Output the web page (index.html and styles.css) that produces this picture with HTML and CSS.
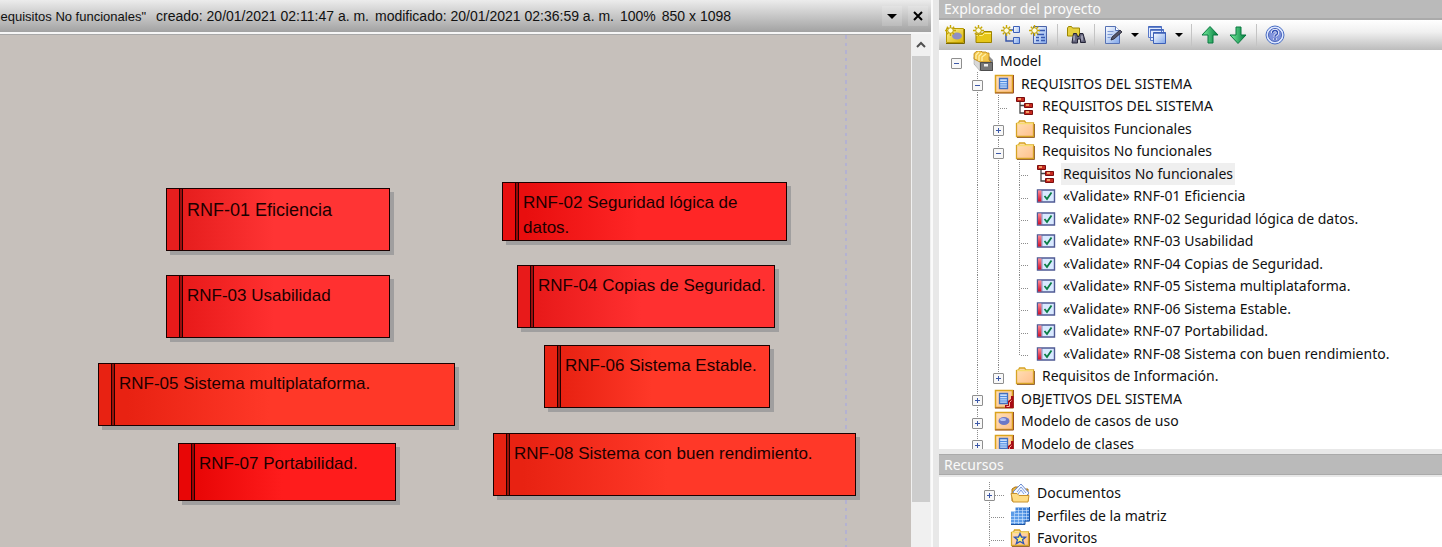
FILE: index.html
```html
<!DOCTYPE html>
<html lang="es">
<head>
<meta charset="utf-8">
<title>Requisitos No funcionales</title>
<link rel="stylesheet" href="styles.css">
</head>
<body>
<svg class="defs" aria-hidden="true">
  <defs>
    <linearGradient id="gGold" x1="0" y1="0" x2="1" y2="1"><stop offset="0" stop-color="#fff3a0"/><stop offset="1" stop-color="#d9b400"/></linearGradient>
    <linearGradient id="gPeach" x1="0" y1="0" x2="1" y2="1"><stop offset="0" stop-color="#ffe0b8"/><stop offset="1" stop-color="#ffc08c"/></linearGradient>
    <linearGradient id="gBlue" x1="0" y1="0" x2="1" y2="1"><stop offset="0" stop-color="#ffffff"/><stop offset="1" stop-color="#7fa6ea"/></linearGradient>
    <linearGradient id="gGreen" x1="0" y1="0" x2="1" y2="0"><stop offset="0" stop-color="#7af0a0"/><stop offset="1" stop-color="#007a3c"/></linearGradient>
    <linearGradient id="gRed" x1="0" y1="0" x2="0" y2="1"><stop offset="0" stop-color="#ff8a94"/><stop offset="1" stop-color="#d0102c"/></linearGradient>
  </defs>
  <symbol id="spark" viewBox="0 0 12 12"><path d="M6 0v12M0 6h12M2 2l8 8M10 2l-8 8" stroke="#c8a800" stroke-width="1.5"/><circle cx="6" cy="6" r="3" fill="#fffde0" stroke="#b89a00"/></symbol>
  <symbol id="new-view" viewBox="0 0 20 20"><path d="M1.500 3.500h17v14h-17z" fill="url(#gGold)" stroke="#b89a00"/><path d="M1 18.500h18.500V4" fill="none" stroke="#7a6600"/><ellipse cx="12" cy="11" rx="5" ry="3.500" fill="#8f8fc4"/><use href="#spark" x="0" y="0" width="11" height="11"/></symbol>
  <symbol id="new-folder" viewBox="0 0 20 20"><path d="M3 17.500V9h6l2-2.500h7.500v11z" fill="#e6c619" stroke="#9c8300"/><path d="M3.500 10.500h6l2-2h6.500" fill="none" stroke="#fff08a"/><use href="#spark" x="0" y="0" width="11" height="11"/></symbol>
  <symbol id="new-diagram" viewBox="0 0 20 20"><path d="M5 8v8h8M8 5h5" fill="none" stroke="#3856a8" stroke-width="1.500"/><path d="M12.500 1.500h6v6h-6zM12.500 12.500h6v6h-6z" fill="url(#gBlue)" stroke="#3c60b8"/><use href="#spark" x="0" y="0" width="11" height="11"/></symbol>
  <symbol id="new-element" viewBox="0 0 20 20"><path d="M4.500 1.500h13v17h-13z" fill="url(#gBlue)" stroke="#4a62a8"/><path d="M10 5.500h6M8 9.500h7M7 12.500h3M12 12.500h4M7 15.500h3M12 15.500h4" stroke="#3658b0" stroke-width="1.500"/><use href="#spark" x="0" y="0" width="11" height="11"/></symbol>
  <symbol id="find" viewBox="0 0 20 20"><path d="M1.500 11V3l1-1.500h3l1 1.500h7v8z" fill="#e6d040" stroke="#9c8700"/><path d="M6 17.500l1.500-9h3l1 3h1.500l1-3h3l2.500 9h-5V14h-3v4H6z" fill="#65657c" stroke="#232336"/><path d="M8 10.500v5M16 10.500v5" stroke="#d4d4e4"/></symbol>
  <symbol id="edit-doc" viewBox="0 0 20 20"><path d="M2.500 1.500h10l4 4v13h-14z" fill="url(#gBlue)" stroke="#5672b4"/><path d="M12.500 1.500v4h4" fill="#fff" stroke="#5672b4"/><path d="M4.500 6.500h6M4.500 9.500h5M4.500 12.500h3" stroke="#7d99d4"/><path d="M8 15l1-3 8-7 2 2-8 7z" fill="#555568" stroke="#20202c" stroke-width=".8"/></symbol>
  <symbol id="windows" viewBox="0 0 20 20"><path d="M1.500 1.500h13v11h-13zM3.500 4.500h13v11h-13z" fill="#e3ecff" stroke="#5878c8"/><path d="M6.500 7.500h12v11h-12z" fill="url(#gBlue)" stroke="#3c60b8"/><path d="M1.500 2h13M3.500 5h13M6.500 8h12" stroke="#3c60b8" stroke-width="1.500"/></symbol>
  <symbol id="up" viewBox="0 0 20 20"><path d="M10 1.500l8 8.500h-5v8H8v-8H2z" fill="url(#gGreen)" stroke="#087840"/></symbol>
  <symbol id="down" viewBox="0 0 20 20"><path d="M10 18.500l8-8.500h-5V2H8v8H2z" fill="url(#gGreen)" stroke="#087840"/></symbol>
  <symbol id="help" viewBox="0 0 20 20"><circle cx="10" cy="10" r="9" fill="#dce6ff" stroke="#4a6fc4"/><circle cx="10" cy="10" r="6.500" fill="#8193dc" stroke="#4964b8"/><path d="M7.500 8q0-2.500 2.500-2.500T12.500 8q0 1.300-1.500 2-1 .5-1 1.800M10 13v2" fill="none" stroke="#fff" stroke-width="3"/><path d="M7.500 8q0-2.500 2.500-2.500T12.500 8q0 1.300-1.500 2-1 .5-1 1.800M10 13v2" fill="none" stroke="#3450b4" stroke-width="1.500"/></symbol>
  <symbol id="cabinet" viewBox="0 0 20 20"><path d="M1 4l7-4 8 5 4 4v11H9L1 13z" fill="#8d8d8d"/><path d="M1 6l6 5v9l-6-7z" fill="#d8d8d8" stroke="#999" stroke-width=".5"/><path d="M1 8V2.500L4 0h4l1 1h4l1 1h2v7l2 2H7z" fill="#f3c64c" stroke="#b98310" stroke-width=".8"/><path d="M3 8V4l3-3M6 10V5l3-3M9 10V6l4-3" fill="none" stroke="#fff1a8" stroke-width="1.300"/><path d="M7.500 11.500h12v8h-12z" fill="#777" stroke="#4d4d4d"/><path d="M11 13h4v2.500h-4z" fill="#eee"/></symbol>
  <symbol id="pkg" viewBox="0 0 20 20"><path d="M1.500 1.500h17v17h-17z" fill="url(#gPeach)" stroke="#dba31c" stroke-width="1.500"/><path d="M1 19h18.500V1" fill="none" stroke="#99502c"/><path d="M5.500 4.500h8v10h-8z" fill="#c9defc" stroke="#426fc0" stroke-width="1.300"/><path d="M6 7.500h7M6 9.800h7M6 12h7" stroke="#4c8ae0"/></symbol>
  <symbol id="pkg-red" viewBox="0 0 20 20"><use href="#pkg" width="20" height="20"/><path d="M11 19v-3h3v-4l3-2V7h2.500v12z" fill="#a80a14"/><path d="M12.500 17.500h3v-4l2-2" fill="none" stroke="#ffb4a0"/></symbol>
  <symbol id="pkg-use" viewBox="0 0 20 20"><path d="M1.500 1.500h17v17h-17z" fill="url(#gPeach)" stroke="#dba31c" stroke-width="1.500"/><path d="M1 19h18.500V1" fill="none" stroke="#99502c"/><ellipse cx="10" cy="10" rx="5.500" ry="4" fill="#6c78c8"/><ellipse cx="9" cy="8.500" rx="3" ry="1.500" fill="#b5c0f2"/></symbol>
  <symbol id="folder" viewBox="0 0 20 20"><path d="M1.500 17.500v-13l2-.5 1-2h5l1.500 2h7.500v13.500z" fill="url(#gPeach)" stroke="#d6a324" stroke-width="1.300"/><path d="M2 18.500h17.500V5" fill="none" stroke="#9c6a38"/><path d="M2 4.500h16" stroke="#f7dc6e" stroke-width="1.500"/></symbol>
  <symbol id="diagram" viewBox="0 0 20 20"><path d="M5 5v12h5M5 9.500h5" fill="none" stroke="#444" stroke-width="1.300"/><path d="M1.500 1.500h8v4h-8zM9.500 7.500h8v4h-8zM9.500 14.500h8v4h-8z" fill="#c52a20" stroke="#7a0d0d"/><path d="M3 3h3M11 9h3M11 16h3" stroke="#ffc47c" stroke-width="1.300"/></symbol>
  <symbol id="req" viewBox="0 0 20 20"><path d="M1.500 4h17v12h-17z" fill="#d9e9ff" stroke="#4f5a94" stroke-width="1.400"/><path d="M2 4.500h3.500v11H2z" fill="url(#gRed)"/><path d="M6 4.500v11" stroke="#4f5a94" stroke-width=".6"/><path d="M8.500 10l2.500 3 4.500-6.500" fill="none" stroke="#0a7c44" stroke-width="1.800"/></symbol>
  <symbol id="docs" viewBox="0 0 20 20"><path d="M2 18V6l3-2h3l2 2h8v12z" fill="#e8b240" stroke="#a8741c"/><path d="M3 9l8-8 8 9-4 4H6z" fill="#f4f8ff" stroke="#6c8cd0"/><path d="M7 9l4-5 5 6M8 11l3-4 3 4" fill="none" stroke="#7c9ce0"/><path d="M1 10.500h6l2 2h10l-1 6.500H3z" fill="#ffdc84" stroke="#c8922c"/></symbol>
  <symbol id="matrix" viewBox="0 0 20 20"><path d="M5.500 1.500h14v14h-14z" fill="#3f82d8"/><path d="M1 5.500h14v13H1z" fill="#5c9ce8"/><path d="M5 4.500h14M5 7.500h14M1 10.500h18M1 13.500h18M1 16.500h14M4.500 6v12M8.500 2v16M12.500 2v16M16.500 2v13" stroke="#d4e7ff" stroke-width=".6"/><path d="M1 18.500h14V15h4.500V1" fill="none" stroke="#1e55a4"/></symbol>
  <symbol id="fav" viewBox="0 0 20 20"><use href="#folder" width="20" height="20"/><path d="M10 5.500l1.500 3.500 4 .2-3 2.500 1.200 4L10 13.500 6.300 15.700l1.200-4-3-2.500 4-.2z" fill="#fff36c" stroke="#2f55b4" stroke-width="1.300"/></symbol>
</svg>

<div class="app">
  <main class="editor">
    <header class="editor-bar">
      <span class="doc-name">Requisitos No funcionales"</span>
      <span class="doc-info first">creado: 20/01/2021 02:11:47 a. m.</span>
      <span class="doc-info">modificado: 20/01/2021 02:36:59 a. m.</span>
      <span class="doc-info">100%</span>
      <span class="doc-info">850 x 1098</span>
      <div class="bar-buttons">
        <button class="bar-button" aria-label="Lista de diagramas"><svg viewBox="0 0 10 10"><path d="M0 3h10L5 8z"/></svg></button>
        <button class="bar-button" aria-label="Cerrar"><svg viewBox="0 0 10 10"><path d="M1 1l8 8M9 1L1 9" stroke="#000" stroke-width="2"/></svg></button>
      </div>
    </header>
    <div class="workspace">
      <div class="canvas">
        <div class="page-edge"></div>
        <div class="node n1">RNF-01 Eficiencia</div>
        <div class="node n2">RNF-02 Seguridad lógica de datos.</div>
        <div class="node n3">RNF-03 Usabilidad</div>
        <div class="node n4">RNF-04 Copias de Seguridad.</div>
        <div class="node n5">RNF-05 Sistema multiplataforma.</div>
        <div class="node n6">RNF-06 Sistema Estable.</div>
        <div class="node n7">RNF-07 Portabilidad.</div>
        <div class="node n8">RNF-08 Sistema con buen rendimiento.</div>
      </div>
      <div class="scrollbar">
        <button class="scroll-up" aria-label="Subir"><svg viewBox="0 0 10 10"><path d="M1 7l4-4 4 4" fill="none" stroke="#505050" stroke-width="2"/></svg></button>
        <div class="scroll-thumb"></div>
      </div>
    </div>
  </main>

  <aside class="side">
    <h2 class="panel-title">Explorador del proyecto</h2>
    <div class="toolbar">
      <button class="tool" aria-label="Nueva vista"><svg><use href="#new-view"/></svg></button>
      <button class="tool" aria-label="Nuevo paquete"><svg><use href="#new-folder"/></svg></button>
      <button class="tool" aria-label="Nuevo diagrama"><svg><use href="#new-diagram"/></svg></button>
      <button class="tool" aria-label="Nuevo elemento"><svg><use href="#new-element"/></svg></button>
      <span class="sep"></span>
      <button class="tool" aria-label="Buscar"><svg><use href="#find"/></svg></button>
      <span class="sep"></span>
      <button class="tool drop" aria-label="Documentación"><svg><use href="#edit-doc"/></svg><span class="caret"></span></button>
      <button class="tool drop" aria-label="Ventanas"><svg><use href="#windows"/></svg><span class="caret"></span></button>
      <span class="sep"></span>
      <button class="tool" aria-label="Mover arriba"><svg><use href="#up"/></svg></button>
      <button class="tool" aria-label="Mover abajo"><svg><use href="#down"/></svg></button>
      <span class="sep"></span>
      <button class="tool" aria-label="Ayuda"><svg><use href="#help"/></svg></button>
    </div>
    <ul class="tree">
      <li class="row"><i class="g"><button class="box minus" aria-label="Contraer"></button></i><svg class="ico"><use href="#cabinet"/></svg><span class="label">Model</span></li>
      <li class="row"><i class="g"></i><i class="g line"><button class="box minus" aria-label="Contraer"></button></i><svg class="ico"><use href="#pkg"/></svg><span class="label">REQUISITOS DEL SISTEMA</span></li>
      <li class="row"><i class="g"></i><i class="g line"></i><i class="g line tick"></i><svg class="ico"><use href="#diagram"/></svg><span class="label">REQUISITOS DEL SISTEMA</span></li>
      <li class="row"><i class="g"></i><i class="g line"></i><i class="g line"><button class="box plus" aria-label="Expandir"></button></i><svg class="ico"><use href="#folder"/></svg><span class="label">Requisitos Funcionales</span></li>
      <li class="row"><i class="g"></i><i class="g line"></i><i class="g line"><button class="box minus" aria-label="Contraer"></button></i><svg class="ico"><use href="#folder"/></svg><span class="label">Requisitos No funcionales</span></li>
      <li class="row"><i class="g"></i><i class="g line"></i><i class="g line"></i><i class="g line tick"></i><svg class="ico"><use href="#diagram"/></svg><span class="label selected">Requisitos No funcionales</span></li>
      <li class="row"><i class="g"></i><i class="g line"></i><i class="g line"></i><i class="g line tick"></i><svg class="ico"><use href="#req"/></svg><span class="label">«Validate» RNF-01 Eficiencia</span></li>
      <li class="row"><i class="g"></i><i class="g line"></i><i class="g line"></i><i class="g line tick"></i><svg class="ico"><use href="#req"/></svg><span class="label">«Validate» RNF-02 Seguridad lógica de datos.</span></li>
      <li class="row"><i class="g"></i><i class="g line"></i><i class="g line"></i><i class="g line tick"></i><svg class="ico"><use href="#req"/></svg><span class="label">«Validate» RNF-03 Usabilidad</span></li>
      <li class="row"><i class="g"></i><i class="g line"></i><i class="g line"></i><i class="g line tick"></i><svg class="ico"><use href="#req"/></svg><span class="label">«Validate» RNF-04 Copias de Seguridad.</span></li>
      <li class="row"><i class="g"></i><i class="g line"></i><i class="g line"></i><i class="g line tick"></i><svg class="ico"><use href="#req"/></svg><span class="label">«Validate» RNF-05 Sistema multiplataforma.</span></li>
      <li class="row"><i class="g"></i><i class="g line"></i><i class="g line"></i><i class="g line tick"></i><svg class="ico"><use href="#req"/></svg><span class="label">«Validate» RNF-06 Sistema Estable.</span></li>
      <li class="row"><i class="g"></i><i class="g line"></i><i class="g line"></i><i class="g line tick"></i><svg class="ico"><use href="#req"/></svg><span class="label">«Validate» RNF-07 Portabilidad.</span></li>
      <li class="row"><i class="g"></i><i class="g line"></i><i class="g line"></i><i class="g line half tick"></i><svg class="ico"><use href="#req"/></svg><span class="label">«Validate» RNF-08 Sistema con buen rendimiento.</span></li>
      <li class="row"><i class="g"></i><i class="g line"></i><i class="g line half"><button class="box plus" aria-label="Expandir"></button></i><svg class="ico"><use href="#folder"/></svg><span class="label">Requisitos de Información.</span></li>
      <li class="row"><i class="g"></i><i class="g line"><button class="box plus" aria-label="Expandir"></button></i><svg class="ico"><use href="#pkg-red"/></svg><span class="label">OBJETIVOS DEL SISTEMA</span></li>
      <li class="row"><i class="g"></i><i class="g line"><button class="box plus" aria-label="Expandir"></button></i><svg class="ico"><use href="#pkg-use"/></svg><span class="label">Modelo de casos de uso</span></li>
      <li class="row"><i class="g"></i><i class="g line"><button class="box plus" aria-label="Expandir"></button></i><svg class="ico"><use href="#pkg-red"/></svg><span class="label">Modelo de clases</span></li>
    </ul>
    <h2 class="panel-title lower">Recursos</h2>
    <ul class="tree resources">
      <li class="row"><i class="g line wide"><button class="box plus" aria-label="Expandir"></button></i><svg class="ico"><use href="#docs"/></svg><span class="label">Documentos</span></li>
      <li class="row"><i class="g line wide"></i><svg class="ico"><use href="#matrix"/></svg><span class="label">Perfiles de la matriz</span></li>
      <li class="row"><i class="g line wide"></i><svg class="ico"><use href="#fav"/></svg><span class="label">Favoritos</span></li>
    </ul>
  </aside>
</div>
</body>
</html>
```

FILE: styles.css
```css
* { box-sizing: border-box; }

body {
  margin: 0;
  background: #e8e8e8;
  color: #111;
  font-family: "Noto Sans", "Open Sans", sans-serif;
}

button {
  margin: 0;
  padding: 0;
  border: 0;
  background: none;
  font: inherit;
}

.defs { position: absolute; width: 0; height: 0; }

.app {
  display: grid;
  grid-template-columns: minmax(0, 1fr) 503px;
  grid-template-rows: minmax(0, 1fr);
  gap: 6px;
  height: 100vh;
  overflow: hidden;
}

/* Diagram editor */
.editor {
  display: flex;
  flex-direction: column;
  min-width: 0;
  border-right: 2px solid #fafafa;
}

.editor-bar {
  display: flex;
  align-items: center;
  height: 32px;
  background: linear-gradient(#ececec, #a2a2a2);
  font-family: "Liberation Sans", Arial, sans-serif;
  font-size: 14px;
  white-space: nowrap;
}

.doc-name {
  display: flex;
  justify-content: flex-end;
  width: 146px;
  overflow: hidden;
  font-size: 13px;
}

.doc-info { margin-left: 6px; }
.first { margin-left: 10px; }

.bar-buttons {
  display: flex;
  gap: 6px;
  margin-left: auto;
  padding-right: 3px;
}

.bar-button {
  display: grid;
  place-items: center;
  width: 20px;
  height: 20px;
  background: rgba(255, 255, 255, .15);
}

.bar-button svg { width: 10px; height: 10px; }

.workspace {
  display: flex;
  flex: 1;
  min-height: 0;
  border-top: 2px solid #f6f6f6;
}

.canvas {
  position: relative;
  flex: 1;
  overflow: hidden;
  border-top: 1px solid #a8a8a8;
  background: #c6c0bb;
}

.page-edge {
  position: absolute;
  top: 0;
  bottom: 0;
  left: 845px;
  width: 2px;
  background: repeating-linear-gradient(#b4b2d2 0 4px, transparent 4px 8px, #b4b2d2 8px 11px, transparent 11px 15px);
}

.node {
  --from: #e61e1e;
  --to: #ff3434;
  position: absolute;
  height: 63px;
  padding: 7px 8px 0 20px;
  border: 1px solid #1a0000;
  background:
    linear-gradient(#200, #200) 12px 0 / 1px 100% no-repeat,
    linear-gradient(#200, #200) 15px 0 / 1px 100% no-repeat,
    linear-gradient(rgba(60, 0, 0, .45), rgba(60, 0, 0, .45)) 13px 0 / 2px 100% no-repeat,
    linear-gradient(90deg, var(--from) 8%, var(--to) 48%);
  box-shadow: 4px 4px 0 #a09f9f;
  color: #1c0000;
  font: 17px/25px "Liberation Sans", Arial, sans-serif;
}

.n1 { left: 166px; top: 153px; width: 224px; font-size: 18px; line-height: 28px; }
.n2 { left: 502px; top: 147px; width: 285px; height: 59px; --from: #e80e0e; --to: #ff2626; }
.n3 { left: 166px; top: 240px; width: 224px; --from: #e81a1a; --to: #ff3030; }
.n4 { left: 517px; top: 230px; width: 258px; --from: #e81a1a; --to: #ff3030; }
.n5 { left: 98px; top: 328px; width: 357px; --from: #e82212; --to: #ff3828; }
.n6 { left: 544px; top: 310px; width: 226px; --from: #e82212; --to: #ff3828; }
.n7 { left: 178px; top: 408px; width: 218px; height: 58px; --from: #e80606; --to: #ff1c1c; }
.n8 { left: 493px; top: 398px; width: 363px; --from: #e82212; --to: #ff3828; }

.scrollbar {
  display: flex;
  flex-direction: column;
  width: 20px;
  padding: 0 1px;
  background: #f0f0f0;
}

.scroll-up {
  display: grid;
  place-items: center;
  height: 22px;
}

.scroll-up svg { width: 10px; height: 10px; }

.scroll-thumb {
  height: 87%;
  background: #cdcdcd;
}

/* Side panels */
.side {
  display: flex;
  flex-direction: column;
  min-width: 0;
}

.panel-title {
  flex: none;
  height: 20px;
  margin: 0;
  padding-left: 5px;
  border-bottom: 2px solid #aaa;
  background: #bababa;
  color: #fafafa;
  font-size: 14px;
  font-weight: 400;
  line-height: 18px;
}

.lower {
  height: 21px;
  margin-top: 5px;
  border-top: 1px solid #aaa;
  border-bottom-width: 1px;
  line-height: 20px;
}

.toolbar {
  display: flex;
  flex: none;
  align-items: center;
  gap: 8px;
  height: 30px;
  padding-left: 6px;
  background: linear-gradient(#fff, #f0f0f0 40%, #bcbcbc);
}

.tool { display: flex; align-items: center; height: 20px; }
.tool svg { width: 20px; height: 20px; }
.drop { gap: 8px; }

.caret {
  border: 4px solid transparent;
  border-top-color: #000;
  border-bottom-width: 0;
}

.sep {
  width: 1px;
  height: 22px;
  background: #c4c4c4;
}

.tree {
  display: grid;
  flex: 1;
  grid-auto-rows: 22px 23px;
  align-content: start;
  min-height: 0;
  margin: 0;
  padding: 0 0 0 7px;
  overflow: hidden;
  background: #fff;
  font-size: 14px;
  list-style: none;
}

.resources {
  flex: 0 0 70px;
  margin-top: 2px;
  padding: 5px 0 0 40px;
}

.row {
  display: flex;
  align-items: center;
  white-space: nowrap;
}

/* Guide cell: dotted trunk down the middle, optional tick to the icon */
.g {
  display: grid;
  place-items: center;
  flex: none;
  align-self: stretch;
  width: 21px;
  padding-top: 4px;
}

.line { background: repeating-linear-gradient(#8c8c8c 0 1px, transparent 1px 2px) 10px 0 / 1px 100% no-repeat; }
.half { background-size: 1px 13px; }

.tick {
  background:
    repeating-linear-gradient(#8c8c8c 0 1px, transparent 1px 2px) 10px 0 / 1px 100% no-repeat,
    repeating-linear-gradient(90deg, #8c8c8c 0 1px, transparent 1px 2px) 12px 13px / 8px 1px no-repeat;
}

.tick.half { background-size: 1px 13px, 8px 1px; }

.wide {
  justify-content: start;
  width: 25px;
  padding-left: 5px;
  background:
    repeating-linear-gradient(#8c8c8c 0 1px, transparent 1px 2px) 10px 0 / 1px 100% no-repeat,
    repeating-linear-gradient(90deg, #8c8c8c 0 1px, transparent 1px 2px) 12px 13px / 13px 1px no-repeat;
}

.box {
  width: 11px;
  height: 11px;
  border: 1px solid #8e8e8e;
  border-radius: 1px;
  background: linear-gradient(#3c58a8, #3c58a8) 2px 4px / 5px 1px no-repeat, #f8f8f8;
}

.plus {
  background:
    linear-gradient(#3c58a8, #3c58a8) 2px 4px / 5px 1px no-repeat,
    linear-gradient(#3c58a8, #3c58a8) 4px 2px / 1px 5px no-repeat,
    #f8f8f8;
}

.ico {
  flex: none;
  width: 20px;
  height: 20px;
  margin-left: 6px;
}

.label {
  margin-left: 5px;
  padding: 0 2px;
  line-height: 22px;
}

.selected { background: #efefef; }
```
